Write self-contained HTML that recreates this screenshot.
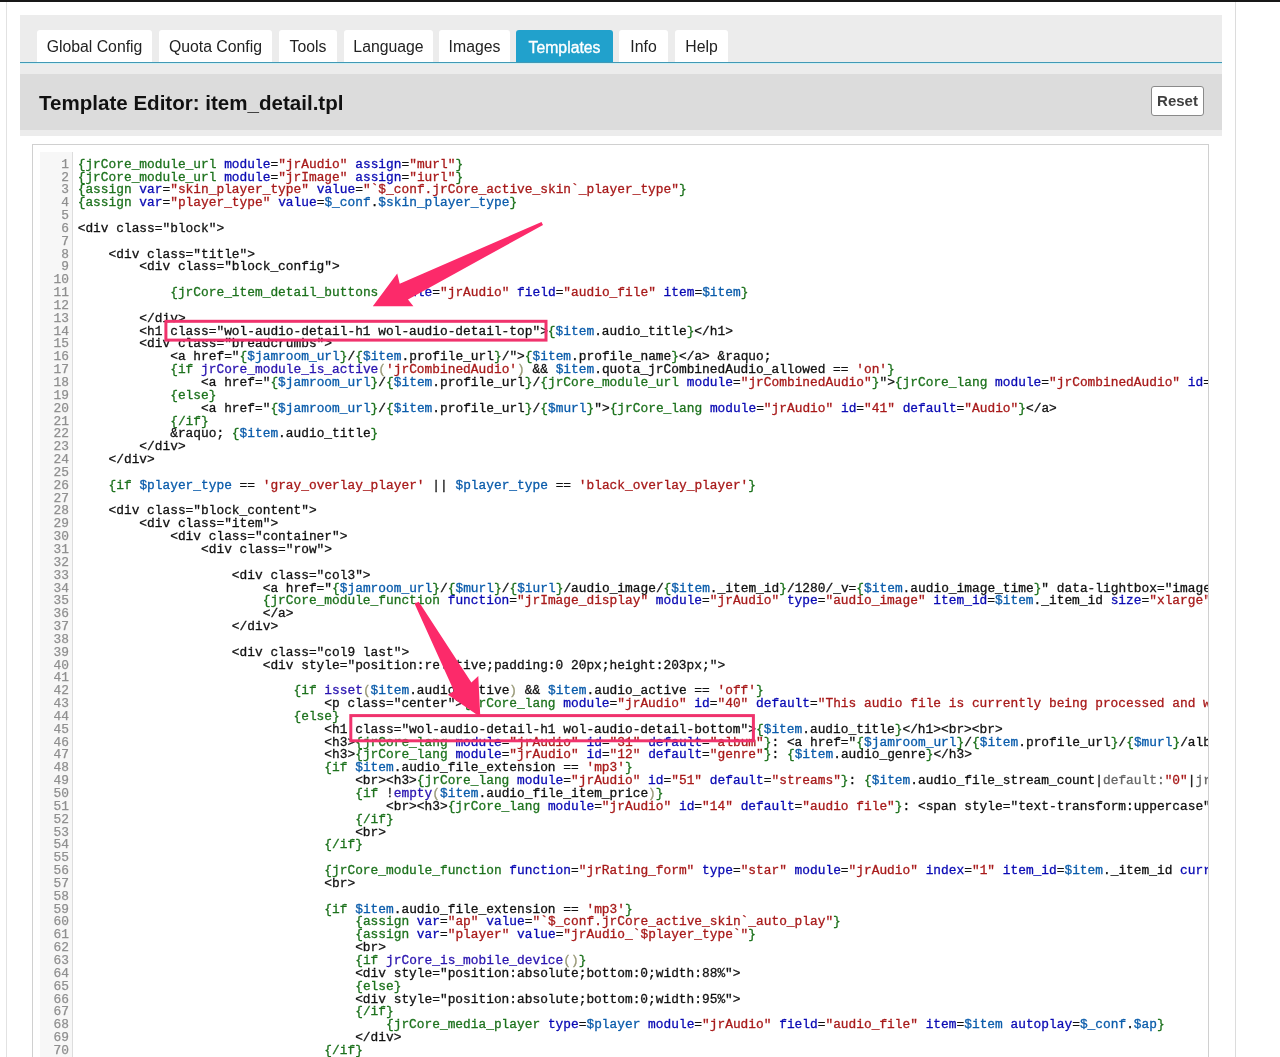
<!DOCTYPE html>
<html><head><meta charset="utf-8"><title>Template Editor</title>
<style>
*{margin:0;padding:0;box-sizing:border-box}
html,body{width:1280px;height:1057px;overflow:hidden;background:#fff;position:relative}
body{font-family:"Liberation Sans",sans-serif}
#wrap{position:absolute;left:0;top:0;width:1280px;height:1057px;will-change:transform}
#topbar{position:absolute;left:0;top:0;width:1280px;height:2px;background:#181818}
#vl{position:absolute;left:6px;top:2px;width:1px;height:1055px;background:#e2e2e2}
#vr{position:absolute;left:1235px;top:2px;width:1px;height:1055px;background:#dcdcdc}
#panel{position:absolute;left:20px;top:15px;width:1202px;height:121px;background:#ececec}
#blue{position:absolute;left:20px;top:62px;width:1202px;height:1px;background:#4298b5;box-shadow:0 1px 0 #d0f0f3}
.tab{position:absolute;top:30px;height:32px;background:#fff;border-radius:3px 3px 0 0;font-size:15.8px;color:#222;text-align:center;line-height:33.6px;white-space:nowrap}
.tab.on{background:#21a1cc;color:#fff;height:33px;line-height:35.4px;-webkit-text-stroke:0.35px #fff}
#hdr{position:absolute;left:20px;top:74px;width:1202px;height:55.5px;background:#dcdcdc}
#title{position:absolute;left:39px;top:88.5px;font-size:20.55px;font-weight:bold;color:#111;white-space:nowrap;line-height:28px}
#reset{position:absolute;left:1151px;top:86px;width:53px;height:30px;background:#fff;border:1px solid #8a8a8a;border-radius:3px;font-size:15px;font-weight:bold;color:#404040;text-align:center;line-height:28px}
#editor{position:absolute;left:32px;top:144px;width:1177px;height:940px;border:1px solid #d0d0d0;background:#fff;overflow:hidden}
#gutter{position:absolute;left:40px;top:152px;width:33px;height:920px;background:#f7f7f7;border-right:1px solid #dddddd}
#nums{position:absolute;left:40px;top:158.66px;width:29px;text-align:right;font-family:"Liberation Mono",monospace;font-size:12.85px;line-height:12.849px;color:#8f8f8f;-webkit-text-stroke:0.25px currentColor}
#clip{position:absolute;left:73px;top:145px;width:1135px;height:920px;overflow:hidden}
#code{position:absolute;left:77.2px;top:158.66px;font-family:"Liberation Mono",monospace;font-size:12.85px;line-height:12.849px;color:#111;white-space:pre;-webkit-text-stroke:0.3px currentColor}
#code .l{height:12.849px}
i{font-style:normal}
.t{color:#1d721d}.a{color:#0a0ab4}.s{color:#a81a1a}.v{color:#0a5cab}.f{color:#2a14b0}.b{color:#999977}.q{color:#666}
#arrows{position:absolute;left:0;top:0}
</style></head><body><div id="wrap">
<div id="topbar"></div>
<div id="vl"></div>
<div id="vr"></div>
<div id="panel"></div>
<div class="tab" style="left:37px;width:115px">Global Config</div>
<div class="tab" style="left:159px;width:113px">Quota Config</div>
<div class="tab" style="left:279px;width:58px">Tools</div>
<div class="tab" style="left:344px;width:89px">Language</div>
<div class="tab" style="left:439px;width:71px">Images</div>
<div class="tab on" style="left:516px;width:97px">Templates</div>
<div class="tab" style="left:619px;width:49px">Info</div>
<div class="tab" style="left:675px;width:53px">Help</div>
<div id="blue"></div>
<div id="hdr"></div>
<div id="title">Template Editor: item_detail.tpl</div>
<div id="reset">Reset</div>
<div id="editor"></div>
<div id="gutter"></div>
<div id="nums">
<div class="n">1</div>
<div class="n">2</div>
<div class="n">3</div>
<div class="n">4</div>
<div class="n">5</div>
<div class="n">6</div>
<div class="n">7</div>
<div class="n">8</div>
<div class="n">9</div>
<div class="n">10</div>
<div class="n">11</div>
<div class="n">12</div>
<div class="n">13</div>
<div class="n">14</div>
<div class="n">15</div>
<div class="n">16</div>
<div class="n">17</div>
<div class="n">18</div>
<div class="n">19</div>
<div class="n">20</div>
<div class="n">21</div>
<div class="n">22</div>
<div class="n">23</div>
<div class="n">24</div>
<div class="n">25</div>
<div class="n">26</div>
<div class="n">27</div>
<div class="n">28</div>
<div class="n">29</div>
<div class="n">30</div>
<div class="n">31</div>
<div class="n">32</div>
<div class="n">33</div>
<div class="n">34</div>
<div class="n">35</div>
<div class="n">36</div>
<div class="n">37</div>
<div class="n">38</div>
<div class="n">39</div>
<div class="n">40</div>
<div class="n">41</div>
<div class="n">42</div>
<div class="n">43</div>
<div class="n">44</div>
<div class="n">45</div>
<div class="n">46</div>
<div class="n">47</div>
<div class="n">48</div>
<div class="n">49</div>
<div class="n">50</div>
<div class="n">51</div>
<div class="n">52</div>
<div class="n">53</div>
<div class="n">54</div>
<div class="n">55</div>
<div class="n">56</div>
<div class="n">57</div>
<div class="n">58</div>
<div class="n">59</div>
<div class="n">60</div>
<div class="n">61</div>
<div class="n">62</div>
<div class="n">63</div>
<div class="n">64</div>
<div class="n">65</div>
<div class="n">66</div>
<div class="n">67</div>
<div class="n">68</div>
<div class="n">69</div>
<div class="n">70</div>
</div>
<div id="clip"><div id="code" style="left:4.7px;top:13.66px"><div class="l"><i class="t">{jrCore_module_url</i> <i class="a">module</i>=<i class="s">"jrAudio"</i> <i class="a">assign</i>=<i class="s">"murl"</i><i class="t">}</i></div><div class="l"><i class="t">{jrCore_module_url</i> <i class="a">module</i>=<i class="s">"jrImage"</i> <i class="a">assign</i>=<i class="s">"iurl"</i><i class="t">}</i></div><div class="l"><i class="t">{assign</i> <i class="a">var</i>=<i class="s">"skin_player_type"</i> <i class="a">value</i>=<i class="s">"`$_conf.jrCore_active_skin`_player_type"</i><i class="t">}</i></div><div class="l"><i class="t">{assign</i> <i class="a">var</i>=<i class="s">"player_type"</i> <i class="a">value</i>=<i class="v">$_conf</i>.<i class="v">$skin_player_type</i><i class="t">}</i></div><div class="l">&#8203;</div><div class="l">&lt;div class="block"&gt;</div><div class="l">&#8203;</div><div class="l">    &lt;div class="title"&gt;</div><div class="l">        &lt;div class="block_config"&gt;</div><div class="l">&#8203;</div><div class="l">            <i class="t">{jrCore_item_detail_buttons</i> <i class="a">module</i>=<i class="s">"jrAudio"</i> <i class="a">field</i>=<i class="s">"audio_file"</i> <i class="a">item</i>=<i class="v">$item</i><i class="t">}</i></div><div class="l">&#8203;</div><div class="l">        &lt;/div&gt;</div><div class="l">        &lt;h1 class="wol-audio-detail-h1 wol-audio-detail-top"&gt;<i class="t">{</i><i class="v">$item</i>.audio_title<i class="t">}</i>&lt;/h1&gt;</div><div class="l">        &lt;div class="breadcrumbs"&gt;</div><div class="l">            &lt;a href="<i class="t">{</i><i class="v">$jamroom_url</i><i class="t">}</i>/<i class="t">{</i><i class="v">$item</i>.profile_url<i class="t">}</i>/"&gt;<i class="t">{</i><i class="v">$item</i>.profile_name<i class="t">}</i>&lt;/a&gt; &amp;raquo;</div><div class="l">            <i class="t">{if</i> <i class="f">jrCore_module_is_active</i><i class="b">(</i><i class="s">'jrCombinedAudio'</i><i class="b">)</i> &amp;&amp; <i class="v">$item</i>.quota_jrCombinedAudio_allowed == <i class="s">'on'</i><i class="t">}</i></div><div class="l">                &lt;a href="<i class="t">{</i><i class="v">$jamroom_url</i><i class="t">}</i>/<i class="t">{</i><i class="v">$item</i>.profile_url<i class="t">}</i>/<i class="t">{jrCore_module_url</i> <i class="a">module</i>=<i class="s">"jrCombinedAudio"</i><i class="t">}</i>"&gt;<i class="t">{jrCore_lang</i> <i class="a">module</i>=<i class="s">"jrCombinedAudio"</i> <i class="a">id</i>=<i class="s">"1"</i> <i class="a">default</i>=<i class="s">"Audio"</i><i class="t">}</i>&lt;/a&gt;</div><div class="l">            <i class="t">{else}</i></div><div class="l">                &lt;a href="<i class="t">{</i><i class="v">$jamroom_url</i><i class="t">}</i>/<i class="t">{</i><i class="v">$item</i>.profile_url<i class="t">}</i>/<i class="t">{</i><i class="v">$murl</i><i class="t">}</i>"&gt;<i class="t">{jrCore_lang</i> <i class="a">module</i>=<i class="s">"jrAudio"</i> <i class="a">id</i>=<i class="s">"41"</i> <i class="a">default</i>=<i class="s">"Audio"</i><i class="t">}</i>&lt;/a&gt;</div><div class="l">            <i class="t">{/if}</i></div><div class="l">            &amp;raquo; <i class="t">{</i><i class="v">$item</i>.audio_title<i class="t">}</i></div><div class="l">        &lt;/div&gt;</div><div class="l">    &lt;/div&gt;</div><div class="l">&#8203;</div><div class="l">    <i class="t">{if</i> <i class="v">$player_type</i> == <i class="s">'gray_overlay_player'</i> || <i class="v">$player_type</i> == <i class="s">'black_overlay_player'</i><i class="t">}</i></div><div class="l">&#8203;</div><div class="l">    &lt;div class="block_content"&gt;</div><div class="l">        &lt;div class="item"&gt;</div><div class="l">            &lt;div class="container"&gt;</div><div class="l">                &lt;div class="row"&gt;</div><div class="l">&#8203;</div><div class="l">                    &lt;div class="col3"&gt;</div><div class="l">                        &lt;a href="<i class="t">{</i><i class="v">$jamroom_url</i><i class="t">}</i>/<i class="t">{</i><i class="v">$murl</i><i class="t">}</i>/<i class="t">{</i><i class="v">$iurl</i><i class="t">}</i>/audio_image/<i class="t">{</i><i class="v">$item</i>._item_id<i class="t">}</i>/1280/_v=<i class="t">{</i><i class="v">$item</i>.audio_image_time<i class="t">}</i>" data-lightbox="images" title="<i class="t">{</i><i class="v">$item</i>.audio_title<i class="t">}</i>"&gt;</div><div class="l">                        <i class="t">{jrCore_module_function</i> <i class="a">function</i>=<i class="s">"jrImage_display"</i> <i class="a">module</i>=<i class="s">"jrAudio"</i> <i class="a">type</i>=<i class="s">"audio_image"</i> <i class="a">item_id</i>=<i class="v">$item</i>._item_id <i class="a">size</i>=<i class="s">"xlarge"</i> <i class="a">crop</i>=<i class="s">"auto"</i> <i class="a">class</i>=<i class="s">"img_scale"</i><i class="t">}</i></div><div class="l">                        &lt;/a&gt;</div><div class="l">                    &lt;/div&gt;</div><div class="l">&#8203;</div><div class="l">                    &lt;div class="col9 last"&gt;</div><div class="l">                        &lt;div style="position:relative;padding:0 20px;height:203px;"&gt;</div><div class="l">&#8203;</div><div class="l">                            <i class="t">{if</i> <i class="f">isset</i><i class="b">(</i><i class="v">$item</i>.audio_active<i class="b">)</i> &amp;&amp; <i class="v">$item</i>.audio_active == <i class="s">'off'</i><i class="t">}</i></div><div class="l">                                &lt;p class="center"&gt;<i class="t">{jrCore_lang</i> <i class="a">module</i>=<i class="s">"jrAudio"</i> <i class="a">id</i>=<i class="s">"40"</i> <i class="a">default</i>=<i class="s">"This audio file is currently being processed and will appear here when complete"</i><i class="t">}</i>&lt;/p&gt;</div><div class="l">                            <i class="t">{else}</i></div><div class="l">                                &lt;h1 class="wol-audio-detail-h1 wol-audio-detail-bottom"&gt;<i class="t">{</i><i class="v">$item</i>.audio_title<i class="t">}</i>&lt;/h1&gt;&lt;br&gt;&lt;br&gt;</div><div class="l">                                &lt;h3&gt;<i class="t">{jrCore_lang</i> <i class="a">module</i>=<i class="s">"jrAudio"</i> <i class="a">id</i>=<i class="s">"31"</i> <i class="a">default</i>=<i class="s">"album"</i><i class="t">}</i>: &lt;a href="<i class="t">{</i><i class="v">$jamroom_url</i><i class="t">}</i>/<i class="t">{</i><i class="v">$item</i>.profile_url<i class="t">}</i>/<i class="t">{</i><i class="v">$murl</i><i class="t">}</i>/albums/<i class="t">{</i><i class="v">$item</i>.audio_album_url<i class="t">}</i>"&gt;<i class="t">{</i><i class="v">$item</i>.audio_album<i class="t">}</i>&lt;/a&gt;&lt;/h3&gt;</div><div class="l">                                &lt;h3&gt;<i class="t">{jrCore_lang</i> <i class="a">module</i>=<i class="s">"jrAudio"</i> <i class="a">id</i>=<i class="s">"12"</i> <i class="a">default</i>=<i class="s">"genre"</i><i class="t">}</i>: <i class="t">{</i><i class="v">$item</i>.audio_genre<i class="t">}</i>&lt;/h3&gt;</div><div class="l">                                <i class="t">{if</i> <i class="v">$item</i>.audio_file_extension == <i class="s">'mp3'</i><i class="t">}</i></div><div class="l">                                    &lt;br&gt;&lt;h3&gt;<i class="t">{jrCore_lang</i> <i class="a">module</i>=<i class="s">"jrAudio"</i> <i class="a">id</i>=<i class="s">"51"</i> <i class="a">default</i>=<i class="s">"streams"</i><i class="t">}</i>: <i class="t">{</i><i class="v">$item</i>.audio_file_stream_count|<i class="q">default:</i><i class="s">"0"</i>|<i class="q">jrCore_number_format</i><i class="t">}</i>&lt;/h3&gt;</div><div class="l">                                    <i class="t">{if</i> !<i class="f">empty</i><i class="b">(</i><i class="v">$item</i>.audio_file_item_price<i class="b">)</i><i class="t">}</i></div><div class="l">                                        &lt;br&gt;&lt;h3&gt;<i class="t">{jrCore_lang</i> <i class="a">module</i>=<i class="s">"jrAudio"</i> <i class="a">id</i>=<i class="s">"14"</i> <i class="a">default</i>=<i class="s">"audio file"</i><i class="t">}</i>: &lt;span style="text-transform:uppercase"&gt;<i class="t">{</i><i class="v">$item</i>.audio_file_original_extension<i class="t">}</i>&lt;/span&gt;&lt;/h3&gt;</div><div class="l">                                    <i class="t">{/if}</i></div><div class="l">                                    &lt;br&gt;</div><div class="l">                                <i class="t">{/if}</i></div><div class="l">&#8203;</div><div class="l">                                <i class="t">{jrCore_module_function</i> <i class="a">function</i>=<i class="s">"jrRating_form"</i> <i class="a">type</i>=<i class="s">"star"</i> <i class="a">module</i>=<i class="s">"jrAudio"</i> <i class="a">index</i>=<i class="s">"1"</i> <i class="a">item_id</i>=<i class="v">$item</i>._item_id <i class="a">current</i>=<i class="v">$item</i>.audio_rating_1_average_count|<i class="q">default:</i>0<i class="t">}</i></div><div class="l">                                &lt;br&gt;</div><div class="l">&#8203;</div><div class="l">                                <i class="t">{if</i> <i class="v">$item</i>.audio_file_extension == <i class="s">'mp3'</i><i class="t">}</i></div><div class="l">                                    <i class="t">{assign</i> <i class="a">var</i>=<i class="s">"ap"</i> <i class="a">value</i>=<i class="s">"`$_conf.jrCore_active_skin`_auto_play"</i><i class="t">}</i></div><div class="l">                                    <i class="t">{assign</i> <i class="a">var</i>=<i class="s">"player"</i> <i class="a">value</i>=<i class="s">"jrAudio_`$player_type`"</i><i class="t">}</i></div><div class="l">                                    &lt;br&gt;</div><div class="l">                                    <i class="t">{if</i> <i class="f">jrCore_is_mobile_device</i><i class="b">()</i><i class="t">}</i></div><div class="l">                                    &lt;div style="position:absolute;bottom:0;width:88%"&gt;</div><div class="l">                                    <i class="t">{else}</i></div><div class="l">                                    &lt;div style="position:absolute;bottom:0;width:95%"&gt;</div><div class="l">                                    <i class="t">{/if}</i></div><div class="l">                                        <i class="t">{jrCore_media_player</i> <i class="a">type</i>=<i class="v">$player</i> <i class="a">module</i>=<i class="s">"jrAudio"</i> <i class="a">field</i>=<i class="s">"audio_file"</i> <i class="a">item</i>=<i class="v">$item</i> <i class="a">autoplay</i>=<i class="v">$_conf</i>.<i class="v">$ap</i><i class="t">}</i></div><div class="l">                                    &lt;/div&gt;</div><div class="l">                                <i class="t">{/if}</i></div></div></div>
<svg id="arrows" width="1280" height="1057" viewBox="0 0 1280 1057">
<rect x="165.9" y="321.3" width="380.1" height="18.8" fill="none" stroke="#f0336d" stroke-width="3"/>
<rect x="350.8" y="715.6" width="402.6" height="25.2" fill="none" stroke="#f0336d" stroke-width="3"/>
<path d="M541.5,222 L543,225 L408,299.4 L413.4,306.25 L372.8,306.25 L397.2,273.4 L399.7,283.75 Z" fill="#fc2a6a"/>
<path d="M414.5,603.5 L418.8,601.8 L471.4,682.5 L478.3,675.9 L480.3,717 L447.9,694.8 L454,691 Z" fill="#fc2a6a"/>
</svg>
</div></body></html>
